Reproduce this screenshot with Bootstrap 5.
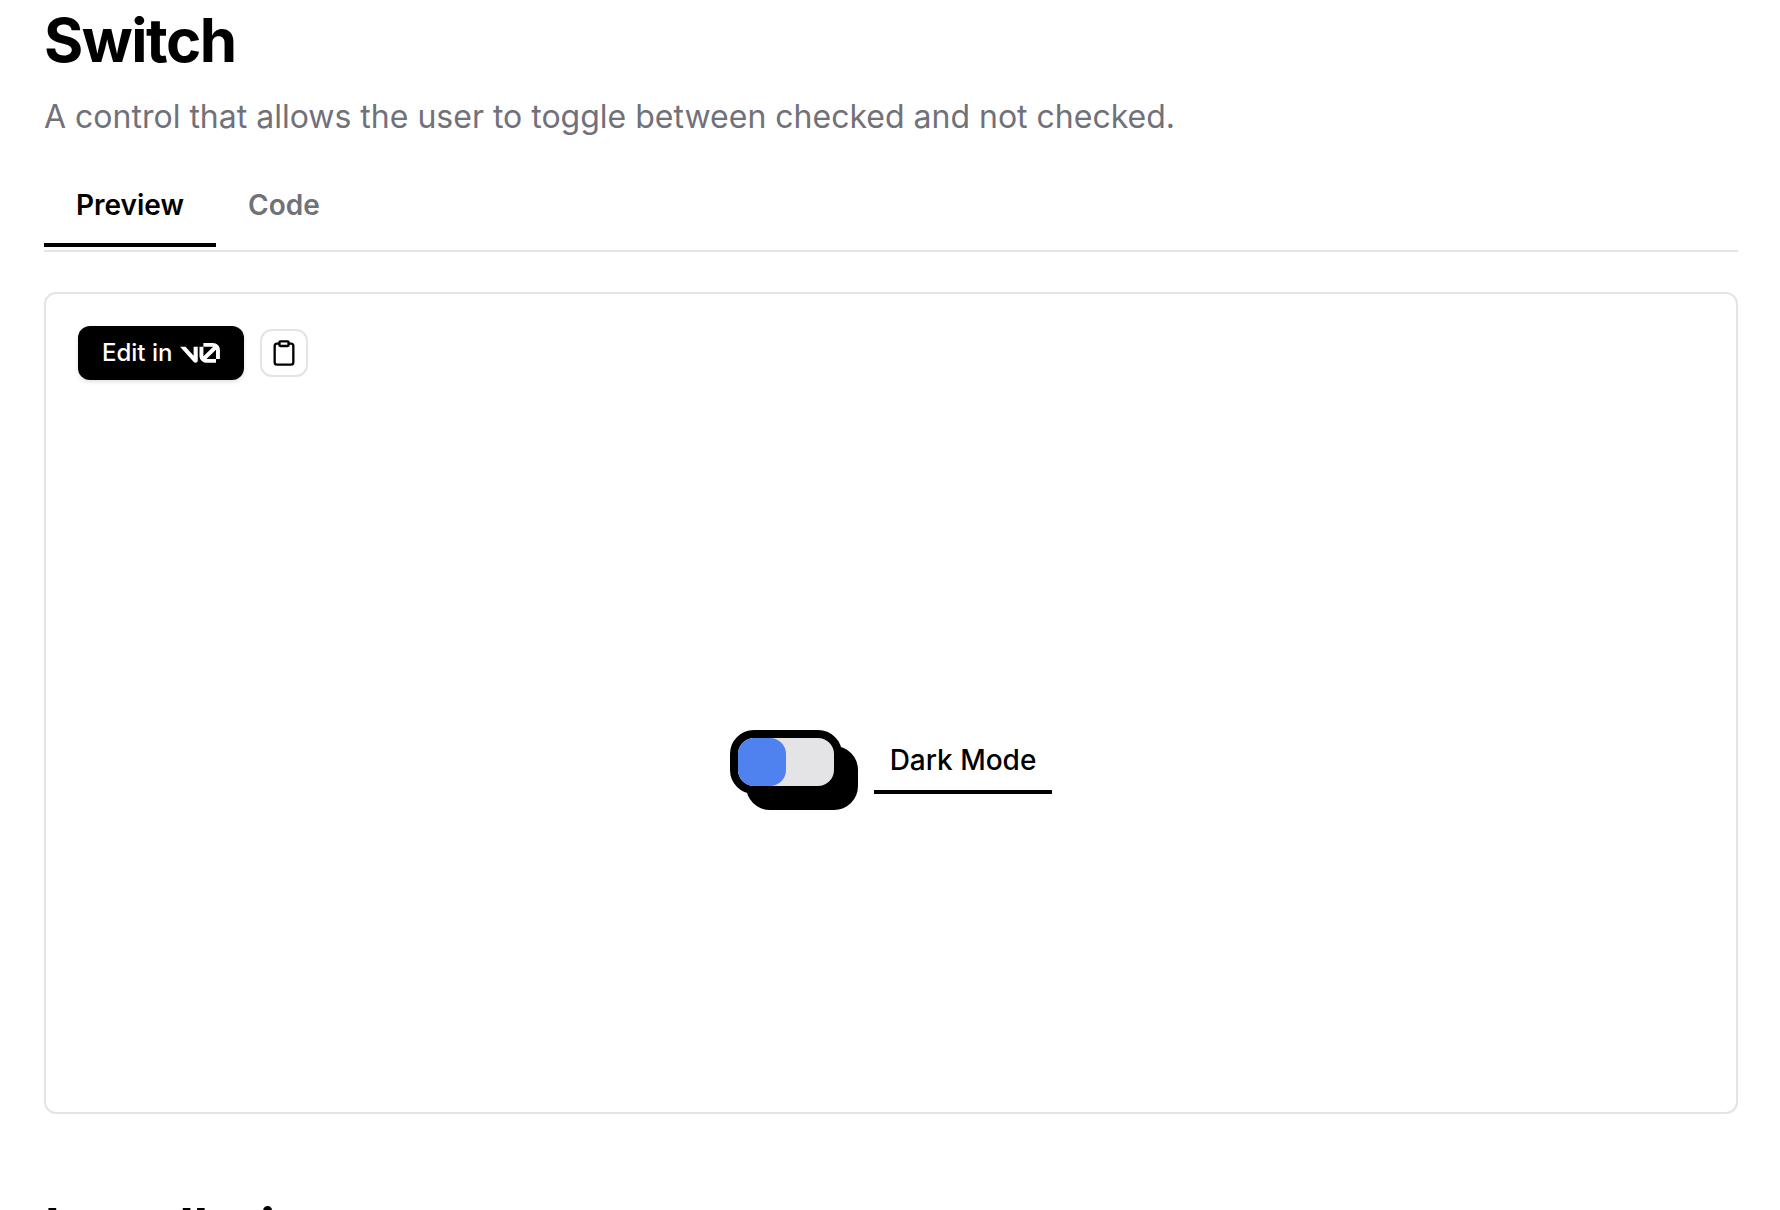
<!DOCTYPE html>
<html lang="en">
<head>
<meta charset="utf-8">
<meta name="viewport" content="width=device-width, initial-scale=1">
<title>Switch</title>
<link href="https://cdn.jsdelivr.net/npm/bootstrap@5.3.0/dist/css/bootstrap.min.css" rel="stylesheet">
<style>
  body { font-family: Inter, "Liberation Sans", sans-serif; color: #000; background: #fff; }
  .doc-page { padding: 4px 42px 40px 44px; }
  .doc-title, .section-title { font-size: 60px; line-height: 72px; letter-spacing: -0.025em; }
  .section-title { font-weight: 600; margin-top: 80px; }
  .doc-lead { font-size: 32px; line-height: 56px; color: #71717a; margin: 13px 0 31px; }
  .doc-tabs { border-bottom: 2px solid #e4e4e4; padding-bottom: 3px; margin-bottom: 40px; }
  .doc-tabs .nav-link { font-size: 28px; line-height: 40px; font-weight: 600; color: #71717a; background: none; padding: 9px 32px 18px; border: 0; border-bottom: 4px solid transparent; }
  .doc-tabs .nav-link.active { color: #000; border-bottom-color: #000; }
  .demo-card { border: 2px solid #e4e4e4; border-radius: 12px; }
  .demo-bar { padding: 32px; gap: 16px; }
  .edit-btn { background: #000; color: #fff; font-size: 24px; font-weight: 500; line-height: 40px; padding: 7px 24px; border: 0; border-radius: 12px; gap: 8px; box-shadow: 0 2px 4px rgba(0,0,0,.12); }
  .edit-btn:hover { background: #222; color: #fff; }
  .copy-btn { width: 48px; height: 48px; border: 2px solid #e4e4e4; border-radius: 12px; background: #fff; }
  .demo-stage { height: 700px; gap: 32px; }
  .neo-switch { appearance: none; flex: none; width: 112px; height: 64px; margin: 0; border: 8px solid #000; border-radius: 24px; background: #e4e4e7; box-shadow: 16px 16px 0 #000; cursor: pointer; }
  .neo-switch::before { content: ""; display: block; width: 48px; height: 48px; border-radius: 16px; background: #4f82ef; }
  .neo-switch:checked::before { margin-left: auto; }
  .neo-label { font-size: 28px; line-height: 60px; font-weight: 500; padding: 0 16px; border-bottom: 4px solid #000; }
</style>
<script src="https://cdn.jsdelivr.net/npm/bootstrap@5.3.0/dist/js/bootstrap.bundle.min.js"></script>
</head>
<body class="overflow-hidden">
<main class="doc-page">
  <h1 class="doc-title fw-bold mb-0">Switch</h1>
  <p class="doc-lead">A control that allows the user to toggle between checked and not checked.</p>

  <div class="nav doc-tabs" role="tablist">
    <button class="nav-link active" type="button" role="tab" aria-selected="true" data-bs-toggle="tab" data-bs-target="#preview">Preview</button>
    <button class="nav-link" type="button" role="tab" aria-selected="false">Code</button>
  </div>

  <section class="demo-card" id="preview" role="tabpanel">
    <div class="demo-bar d-flex align-items-center">
      <button class="btn edit-btn d-flex align-items-center" type="button">
        <span>Edit in</span>
        <svg width="40" height="20" viewBox="0 0 40 20" fill="currentColor" aria-hidden="true">
          <path d="M23.3919 0H32.9188C36.7819 0 39.9136 3.13165 39.9136 6.99475V16.0805H36.0006V6.99475C36.0006 6.90167 35.9969 6.80925 35.9898 6.71766L26.4628 16.079C26.4949 16.08 26.5272 16.0805 26.5595 16.0805H36.0006V19.7762H26.5595C22.6964 19.7762 19.4788 16.6139 19.4788 12.7508V3.68923H23.3919V12.7508C23.3919 12.9253 23.4054 13.0977 23.4316 13.2668L33.1682 3.6995C33.0861 3.6927 33.003 3.68923 32.9188 3.68923H23.3919V0Z"/>
          <path d="M13.7688 19.0956L0 3.68759H5.53933L13.6231 12.7337V3.68759H17.7535V17.5746C17.7535 19.6705 15.1654 20.6584 13.7688 19.0956Z"/>
        </svg>
      </button>
      <button class="copy-btn d-flex align-items-center justify-content-center p-0" type="button" aria-label="Copy">
        <svg width="28" height="28" viewBox="0 0 24 24" fill="none" stroke="#000" stroke-width="2" stroke-linecap="round" stroke-linejoin="round" aria-hidden="true">
          <rect x="8" y="2" width="8" height="4" rx="1"/>
          <path d="M16 4h2a2 2 0 0 1 2 2v14a2 2 0 0 1-2 2H6a2 2 0 0 1-2-2V6a2 2 0 0 1 2-2h2"/>
        </svg>
      </button>
    </div>
    <div class="demo-stage d-flex align-items-center justify-content-center">
      <input class="neo-switch" type="checkbox" role="switch" id="dark-mode">
      <label class="neo-label" for="dark-mode">Dark Mode</label>
    </div>
  </section>

  <h2 class="section-title">Installation</h2>
</main>
</body>
</html>
